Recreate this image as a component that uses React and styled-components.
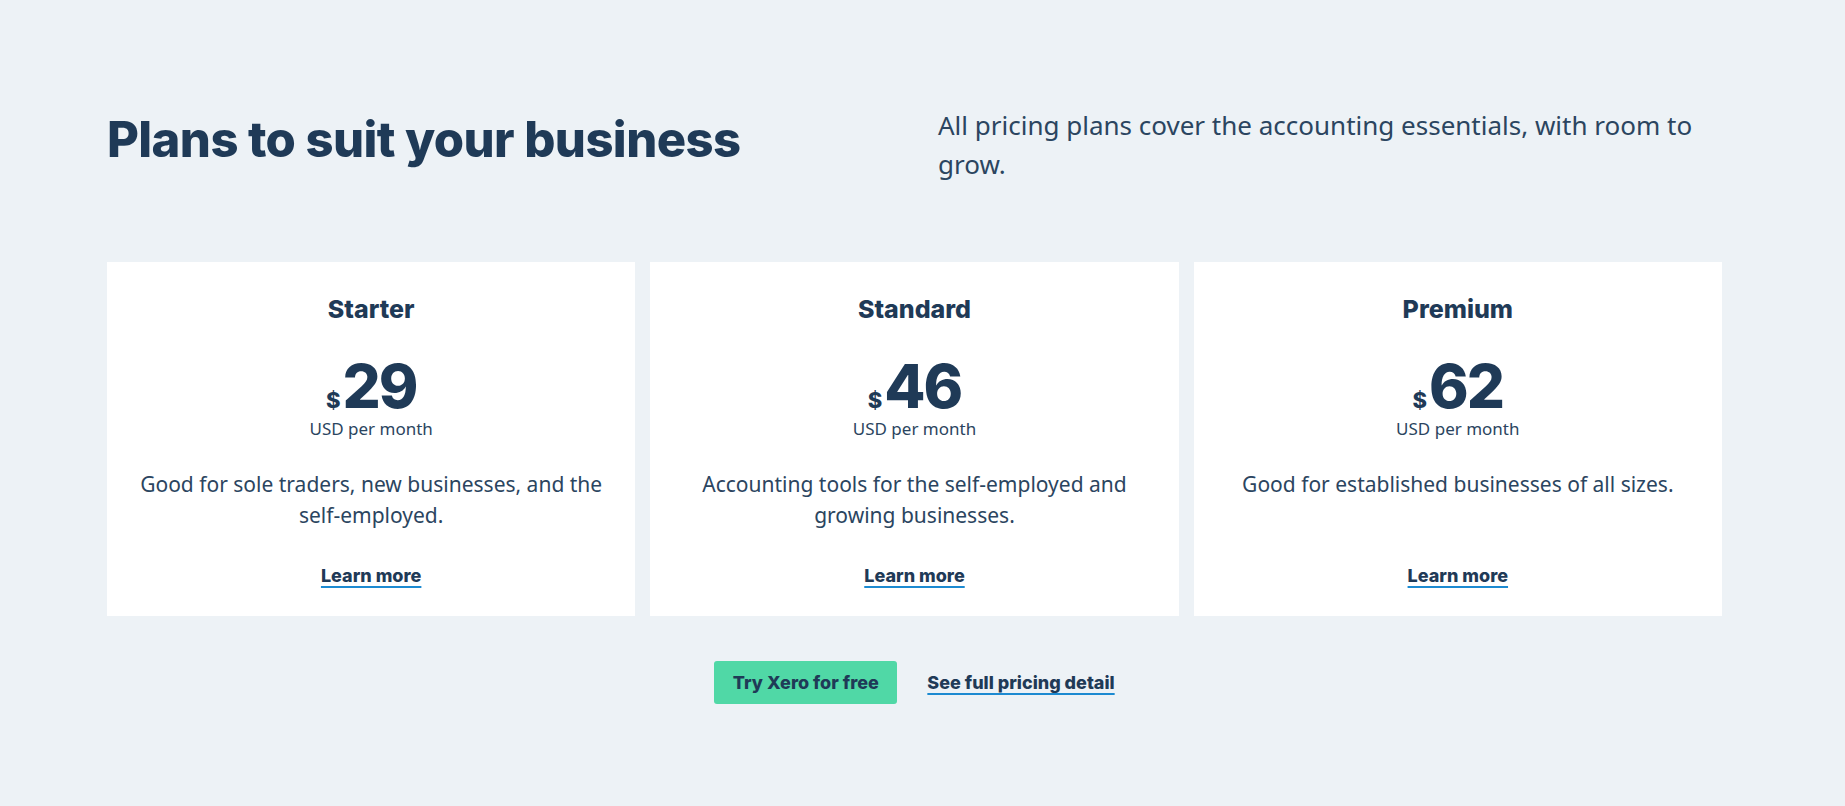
import React from 'react';
import styled, { createGlobalStyle } from 'styled-components';

const GlobalStyle = createGlobalStyle`
  html, body {
    margin: 0;
    padding: 0;
    background: #edf2f6;
  }
  body {
    font-family: Inter, "Noto Sans", sans-serif;
    color: #1f3a57;
  }
`;

const Page = styled.main`
  min-height: 806px;
  padding: 110px 0 0 107px;
  box-sizing: border-box;
  width: 1722px;
`;

const Header = styled.header`
  display: grid;
  grid-template-columns: 831px 1fr;
  align-items: start;
`;

const Title = styled.h1`
  margin: 0;
  font-size: 49px;
  line-height: 60px;
  font-weight: 800;
  letter-spacing: -0.6px;
  color: #1f3a57;
`;

const Lead = styled.p`
  margin: -4px 0 0;
  font-family: "Noto Sans", sans-serif;
  font-size: 26px;
  line-height: 39px;
  color: #2b4560;
  max-width: 784px;
`;

const Cards = styled.section`
  display: grid;
  grid-template-columns: repeat(3, 1fr);
  gap: 15px;
  margin-top: 78px;
`;

const Card = styled.article`
  background: #fff;
  display: flex;
  flex-direction: column;
  align-items: center;
  text-align: center;
  padding: 32px 24px 30px;
  min-height: 354px;
  box-sizing: border-box;
`;

const PlanName = styled.h2`
  margin: 0;
  font-size: 25px;
  line-height: 30px;
  font-weight: 800;
`;

const Price = styled.div`
  display: flex;
  align-items: baseline;
  margin-top: 36px;
  height: 52px;
  line-height: 52px;
`;

const Currency = styled.span`
  font-size: 22px;
  font-weight: 800;
  margin-right: 2px;
`;

const Amount = styled.span`
  font-size: 60px;
  font-weight: 800;
  letter-spacing: -2px;
`;

const Period = styled.div`
  margin-top: 6px;
  font-family: "Noto Sans", sans-serif;
  font-size: 17px;
  line-height: 22px;
  color: #2b4560;
`;

const Description = styled.p`
  margin: 29px 0 0;
  font-family: "Noto Sans", sans-serif;
  font-size: 21px;
  line-height: 31px;
  color: #2b4560;
`;

const TextLink = styled.a`
  font-size: 18px;
  font-weight: 800;
  color: #1f3a57;
  text-decoration: underline;
  text-decoration-color: #1c8ad1;
  text-decoration-thickness: 2px;
  text-underline-offset: 4px;
  cursor: pointer;
`;

const CardLink = styled(TextLink)`
  margin-top: auto;
`;

const Actions = styled.div`
  display: flex;
  justify-content: center;
  align-items: center;
  gap: 30px;
  margin-top: 45px;
`;

const PrimaryButton = styled.button`
  width: 183px;
  height: 43px;
  border: none;
  border-radius: 3px;
  background: #50d8a6;
  color: #1f3a57;
  font-family: Inter, sans-serif;
  font-size: 18px;
  font-weight: 800;
  cursor: pointer;
`;

const plans = [
  { name: 'Starter', price: 29, text: 'Good for sole traders, new businesses, and the self-employed.' },
  { name: 'Standard', price: 46, text: 'Accounting tools for the self-employed and growing businesses.' },
  { name: 'Premium', price: 62, text: 'Good for established businesses of all sizes.' },
];

export default function App() {
  return (
    <>
      <GlobalStyle />
      <Page>
        <Header>
          <Title>Plans to suit your business</Title>
          <Lead>All pricing plans cover the accounting essentials, with room to grow.</Lead>
        </Header>
        <Cards>
          {plans.map((p) => (
            <Card key={p.name}>
              <PlanName>{p.name}</PlanName>
              <Price>
                <Currency>$</Currency>
                <Amount>{p.price}</Amount>
              </Price>
              <Period>USD per month</Period>
              <Description>{p.text}</Description>
              <CardLink>Learn more</CardLink>
            </Card>
          ))}
        </Cards>
        <Actions>
          <PrimaryButton>Try Xero for free</PrimaryButton>
          <TextLink>See full pricing detail</TextLink>
        </Actions>
      </Page>
    </>
  );
}
